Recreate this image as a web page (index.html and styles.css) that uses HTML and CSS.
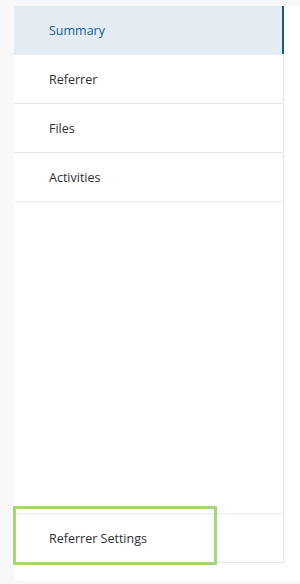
FILE: index.html
```html
<!DOCTYPE html>
<html lang="en">
<head>
    <meta charset="UTF-8">
    <meta name="viewport" content="width=device-width, initial-scale=1.0">
    <title>Referrer</title>
    <link rel="stylesheet" href="styles.css">
</head>
<body>

<div class="panel">
    <nav class="side-nav">
        <a class="nav-item active" href="#">Summary</a>
        <a class="nav-item" href="#">Referrer</a>
        <a class="nav-item" href="#">Files</a>
        <a class="nav-item" href="#">Activities</a>
        <div class="nav-spacer"></div>
        <a class="nav-item nav-bottom" href="#">Referrer Settings</a>
    </nav>
    <div class="highlight"></div>
</div>

</body>
</html>
```

FILE: styles.css
```css
body {
    font-family: 'Open Sans', 'Liberation Sans', sans-serif;
    margin: 0;
    padding: 6px 0 0 14px;
    background-color: #f8f8f8;
    height: 584px;
    box-sizing: border-box;
    overflow: hidden;
}
.panel {
    position: relative;
    background-color: #fff;
    height: 575px;
    border-radius: 0 0 0 5px;
}
.side-nav {
    display: flex;
    flex-direction: column;
    width: 270px;
    height: 557px;
    border-right: 1px solid #e6e6ec;
    border-bottom: 1px solid #e6e6ec;
    box-sizing: border-box;
}
.nav-item {
    display: flex;
    align-items: center;
    height: 49px;
    flex-shrink: 0;
    padding-left: 35px;
    border-bottom: 1px solid #e8e8ee;
    box-sizing: border-box;
    font-size: 12.5px;
    color: #2e2e33;
    text-decoration: none;
}
.nav-item.active {
    background-color: #e3ebf3;
    color: #1b5a97;
    border-bottom-color: #e3ebf3;
    box-shadow: inset -2px 0 0 #1b5a97;
    margin-right: -1px;
}
.nav-spacer {
    flex: 1;
}
.nav-bottom {
    border-top: 1px solid #e8e8ee;
    border-bottom: none;
    height: 49px;
}
.highlight {
    position: absolute;
    left: -1px;
    top: 500px;
    width: 204px;
    height: 59px;
    border: 3.5px solid #a6d67b;
    box-sizing: border-box;
}
```
